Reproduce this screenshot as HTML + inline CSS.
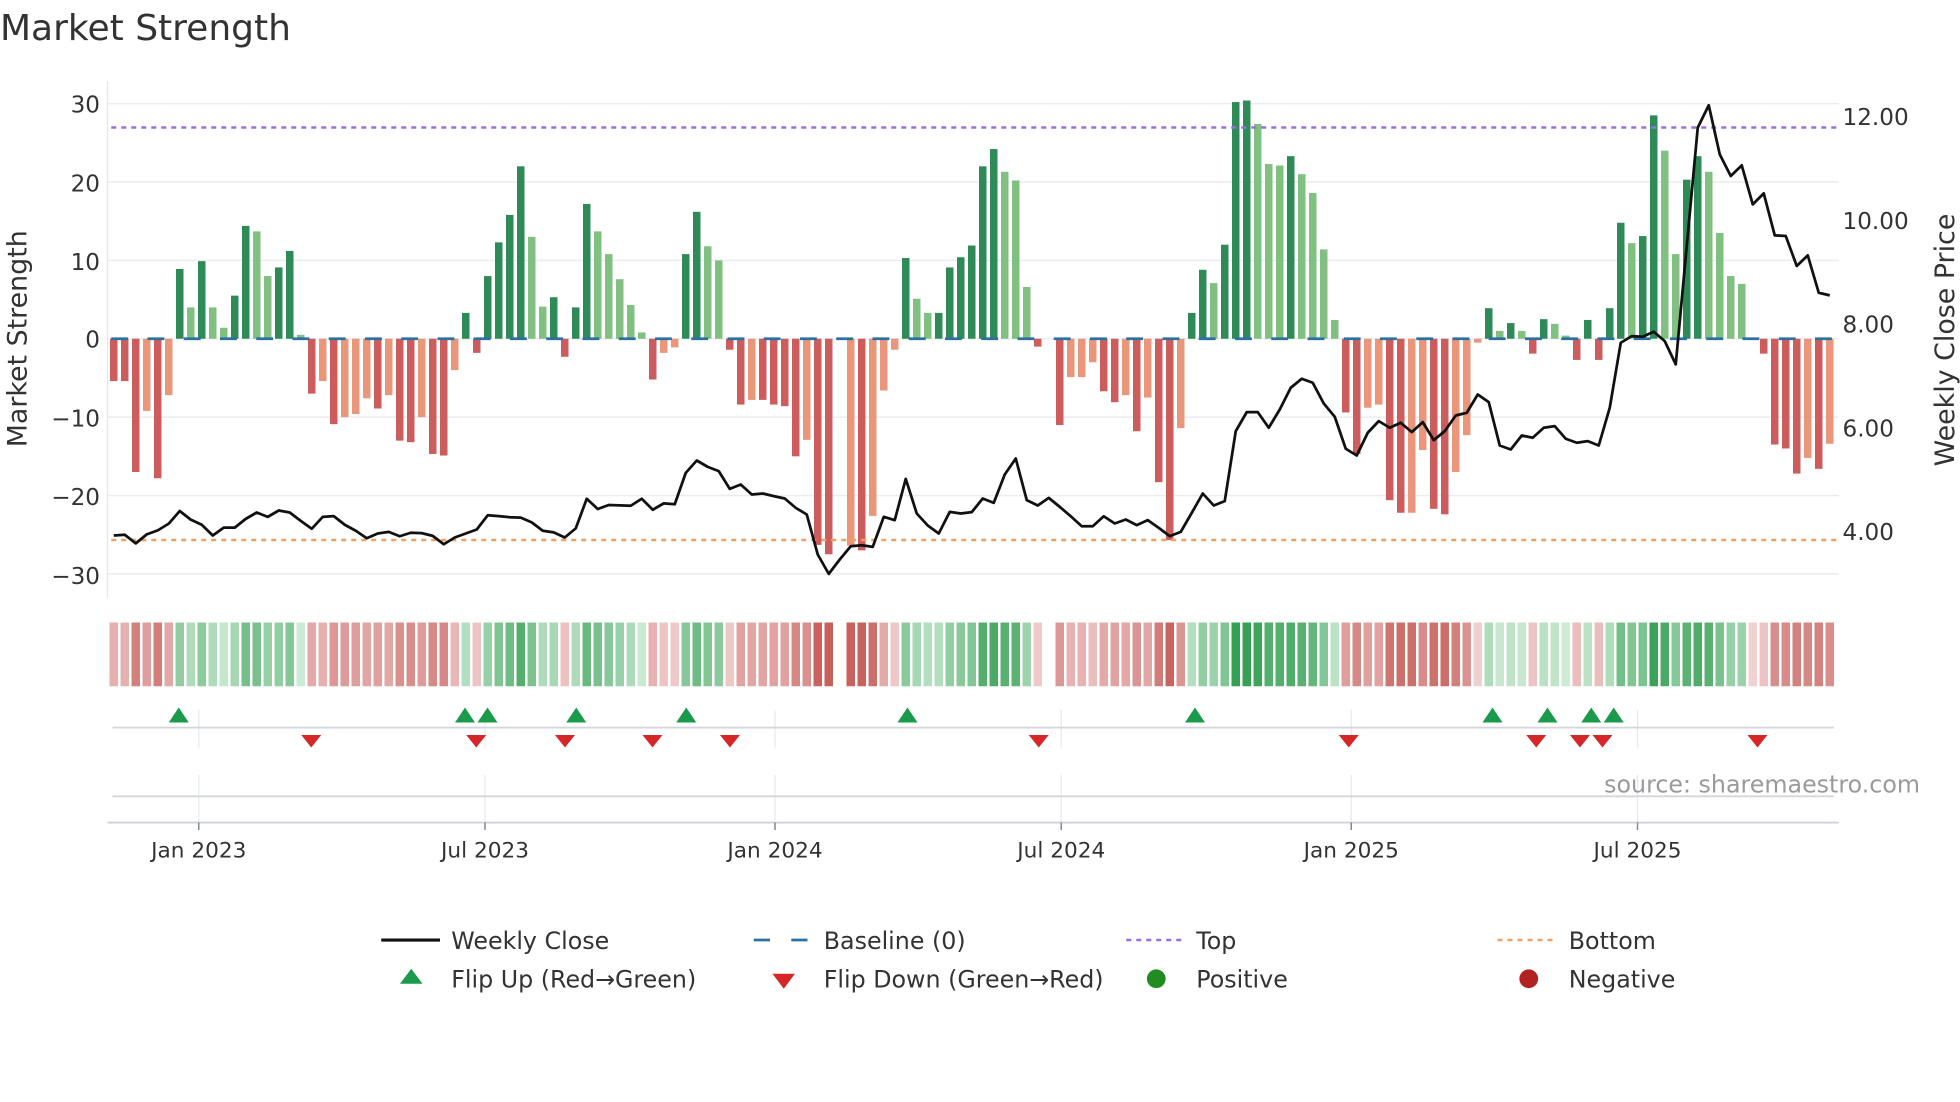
<!DOCTYPE html>
<html><head><meta charset="utf-8">
<style>
html,body{margin:0;padding:0;background:#fff;}
svg{display:block;font-family:"DejaVu Sans","Liberation Sans",sans-serif;}
</style></head>
<body>
<svg id="s" width="1960" height="1102" viewBox="0 0 1568 881.6" preserveAspectRatio="none" xmlns="http://www.w3.org/2000/svg">
<rect width="1568" height="882" fill="#fff"/>
<text x="0" y="32" font-size="28.8" fill="#333">Market Strength</text>
<g id="grid"></g>
<line x1="86" y1="65" x2="86" y2="478" stroke="#e2e5ea" stroke-width="1"/>
<g font-size="18.5" fill="#333" text-anchor="end">
<text x="80" y="90">30</text><text x="80" y="153">20</text><text x="80" y="216">10</text><text x="80" y="278">0</text>
<text x="80" y="341">−10</text><text x="80" y="404">−20</text><text x="80" y="467">−30</text>
</g>
<g font-size="18.5" fill="#333">
<text x="1474" y="100">12.00</text><text x="1474" y="183">10.00</text><text x="1474" y="266">8.00</text>
<text x="1474" y="349">6.00</text><text x="1474" y="432">4.00</text>
</g>
<text transform="translate(21,271) rotate(-90)" font-size="21.5" fill="#333" text-anchor="middle">Market Strength</text>
<text transform="translate(1563,272) rotate(-90)" font-size="21.5" fill="#333" text-anchor="middle">Weekly Close Price</text>
<g id="bars"></g>
<line x1="89" y1="271" x2="1468" y2="271" stroke="#2b6fa3" stroke-width="2.2" stroke-dasharray="13.5 15.5"/>
<line x1="89" y1="102" x2="1470" y2="102" stroke="#9b6ee0" stroke-width="2" stroke-dasharray="4 4"/>
<line x1="89" y1="432" x2="1470" y2="432" stroke="#f0a060" stroke-width="2" stroke-dasharray="4 4"/>
<polyline id="price" fill="none" stroke="#111" stroke-width="2.2" stroke-linejoin="round"/>
<g id="strip"></g>
<g stroke="#e6e9ee" stroke-width="1">
<line x1="159" y1="568" x2="159" y2="598"/><line x1="388" y1="568" x2="388" y2="598"/><line x1="620" y1="568" x2="620" y2="598"/><line x1="849" y1="568" x2="849" y2="598"/><line x1="1081" y1="568" x2="1081" y2="598"/><line x1="1310" y1="568" x2="1310" y2="598"/>
<line x1="159" y1="620" x2="159" y2="658"/><line x1="388" y1="620" x2="388" y2="658"/><line x1="620" y1="620" x2="620" y2="658"/><line x1="849" y1="620" x2="849" y2="658"/><line x1="1081" y1="620" x2="1081" y2="658"/><line x1="1310" y1="620" x2="1310" y2="658"/>
</g>
<line x1="90" y1="582" x2="1467" y2="582" stroke="#d3d6db" stroke-width="1.5"/>
<line x1="90" y1="637" x2="1467" y2="637" stroke="#d3d6db" stroke-width="1.5"/>
<line x1="86" y1="658" x2="1471" y2="658" stroke="#cfd2d7" stroke-width="1.5"/>
<g stroke="#888" stroke-width="1.2">
<line x1="159" y1="658" x2="159" y2="664"/><line x1="388" y1="658" x2="388" y2="664"/><line x1="620" y1="658" x2="620" y2="664"/><line x1="849" y1="658" x2="849" y2="664"/><line x1="1081" y1="658" x2="1081" y2="664"/><line x1="1310" y1="658" x2="1310" y2="664"/>
</g>
<g id="flips"></g>
<text x="1536" y="634" font-size="19" fill="#9a9a9a" text-anchor="end">source: sharemaestro.com</text>
<g font-size="17.3" fill="#333" text-anchor="middle">
<text x="159" y="686">Jan 2023</text><text x="388" y="686">Jul 2023</text><text x="620" y="686">Jan 2024</text>
<text x="849" y="686">Jul 2024</text><text x="1081" y="686">Jan 2025</text><text x="1310" y="686">Jul 2025</text>
</g>
<g font-size="19" fill="#333">
<line x1="305" y1="752" x2="352" y2="752" stroke="#111" stroke-width="2.5"/>
<text x="361" y="759">Weekly Close</text>
<line x1="603" y1="752" x2="647" y2="752" stroke="#2b6fa3" stroke-width="2.2" stroke-dasharray="13 17"/>
<text x="659" y="759">Baseline (0)</text>
<line x1="901" y1="752" x2="945" y2="752" stroke="#9b6ee0" stroke-width="2" stroke-dasharray="4 4"/>
<text x="957" y="759">Top</text>
<line x1="1198" y1="752" x2="1243" y2="752" stroke="#f0a060" stroke-width="2" stroke-dasharray="4 4"/>
<text x="1255" y="759">Bottom</text>
<polygon points="320,787 329,775 338,787" fill="#1a9a4a"/>
<text x="361" y="790">Flip Up (Red→Green)</text>
<polygon points="618,779 636,779 627,791" fill="#d62728"/>
<text x="659" y="790">Flip Down (Green→Red)</text>
<circle cx="925" cy="783" r="7.5" fill="#228b22"/>
<text x="957" y="790">Positive</text>
<circle cx="1223" cy="783" r="7.5" fill="#b22222"/>
<text x="1255" y="790">Negative</text>
</g>
</svg>
<script>
(function(){
var NS="http://www.w3.org/2000/svg";
function el(t,a,p){var e=document.createElementNS(NS,t);for(var k in a)e.setAttribute(k,a[k]);p.appendChild(e);return e;}
var g=document.getElementById('grid');
[30,20,10,0,-10,-20,-30].forEach(function(v){var y=271-v*6.27;el('line',{x1:86,x2:1471,y1:y,y2:y,stroke:'#e9ecf1','stroke-width':1.2},g);});
var B="-5.4d,-5.4d,-17d,-9.2l,-17.8d,-7.2l,8.9d,4l,9.9d,4l,1.4l,5.5d,14.4d,13.7l,8l,9.1d,11.2d,0.5l,-7d,-5.4l,-10.9d,-10l,-9.6l,-7.6l,-8.9d,-7.2l,-13d,-13.2d,-10l,-14.7d,-14.9d,-4l,3.3d,-1.8d,8d,12.3d,15.8d,22d,13l,4.1l,5.3d,-2.3d,4d,17.2d,13.7l,10.8l,7.6l,4.3l,0.8l,-5.2d,-1.8l,-1.1l,10.8d,16.2d,11.8l,10l,-1.4d,-8.4d,-7.8l,-7.8d,-8.4d,-8.6d,-15d,-12.9l,-26.3d,-27.5d,0d,-26.4l,-27d,-22.6l,-6.6l,-1.4l,10.3d,5.1l,3.3l,3.3d,9.1d,10.4d,11.9d,22d,24.2d,21.3l,20.2l,6.6l,-1d,0d,-11d,-4.9l,-4.9l,-3l,-6.7d,-8.1d,-7.2l,-11.8d,-7.5l,-18.3d,-25.7d,-11.4l,3.3d,8.8d,7.1l,12d,30.2d,30.4d,27.4l,22.3l,22.1l,23.3d,21l,18.6l,11.4l,2.4l,-9.4d,-14.7d,-8.8l,-8.4l,-20.6d,-22.2d,-22.2l,-14.2l,-21.7d,-22.4d,-17l,-12.3l,-0.5l,3.9d,1l,2d,1l,-1.9d,2.5d,1.9l,0.4l,-2.7d,2.4d,-2.7d,3.9d,14.8d,12.2l,13.1d,28.5d,24l,10.8l,20.3d,23.3d,21.3l,13.5l,8l,7l,-0.3d,-1.9d,-13.5d,-14d,-17.2d,-15.2l,-16.6d,-13.4l".split(',');
var bars=document.getElementById('bars'),strip=document.getElementById('strip');
function mix(a,b,t){return 'rgb('+a.map(function(c,i){return Math.round(c+(b[i]-c)*t);}).join(',')+')';}
B.forEach(function(s,i){
 var v=parseFloat(s),d=s.slice(-1)=='d',x=91+i*8.8;
 if(v!=0){
  var y0=271,y1=271-v*6.27;
  var c=v>0?(d?'#2e8b57':'#80c080'):(d?'#cd5c5c':'#e9967a');
  if(Math.abs(v)>0.35) el('rect',{x:x-3,y:Math.min(y0,y1),width:6,height:Math.abs(y1-y0),fill:c},bars);
  var t,col;
  if(v>0){t=Math.min(Math.pow(v/30,0.7),1);col=mix([214,239,220],[52,160,82],t);}
  else{t=Math.min(Math.pow(-v/27,0.7),1);col=mix([244,214,214],[200,96,92],t);}
  el('rect',{x:x-3.4,y:498,width:6.8,height:51,fill:col},strip);
 }
});
var P=[428.4,427.8,434.7,427.5,424.3,418.9,408.8,415.7,419.8,428.4,422.1,422.1,415.1,410,413.5,408.4,410,416.7,423,413.5,412.9,419.8,424.6,430.6,426.8,425.5,429,426.2,426.5,428.7,435.4,430,426.8,423.6,412.2,412.9,413.8,414.1,417.9,424.6,425.9,430,422.7,399,407.2,404,404.3,404.6,399,407.8,402.7,403.4,378.3,368.4,373.5,376.9,391.1,387.6,395.6,394.8,396.9,398.8,406.3,411.6,443.6,459.1,447.6,437,436.2,437.5,413.5,416.1,383.1,410.8,420.4,426.8,409.5,410.8,409.7,398.8,402.3,379.6,366.8,400.1,404.4,398.3,405.5,413,421,421,413,418.8,415.6,420.1,416.1,422.3,428.9,425.5,410.3,394.8,404.4,400.9,344.9,329.7,329.7,342.2,327.6,310.2,303,306.2,322.8,333.4,359,364.4,346.2,336.9,342.2,338.2,345.7,337.7,352.1,344.9,332.4,330.2,315.6,321.7,356.4,359.6,348.4,350.2,342.2,340.9,351,354.2,352.9,356.4,326.2,274.2,268.9,269.4,265.4,272.9,291.5,196.8,102.1,84.2,123.5,140.8,132.3,163.5,154.7,188.3,188.8,212.8,204.3,234.2,236.3];
document.getElementById('price').setAttribute('points',P.map(function(y,i){return (91+i*8.8).toFixed(1)+','+y;}).join(' '));
var f=document.getElementById('flips');
[143,372,390,461,549,726,956,1194,1238,1273,1291].forEach(function(x){el('polygon',{points:(x-8)+',578 '+x+',566 '+(x+8)+',578',fill:'#1a9a4a'},f);});
[249,381,452,522,584,831,1079,1229,1264,1282,1406].forEach(function(x){el('polygon',{points:(x-8)+',588 '+(x+8)+',588 '+x+',598',fill:'#d62728'},f);});
})();
</script>
</body></html>
